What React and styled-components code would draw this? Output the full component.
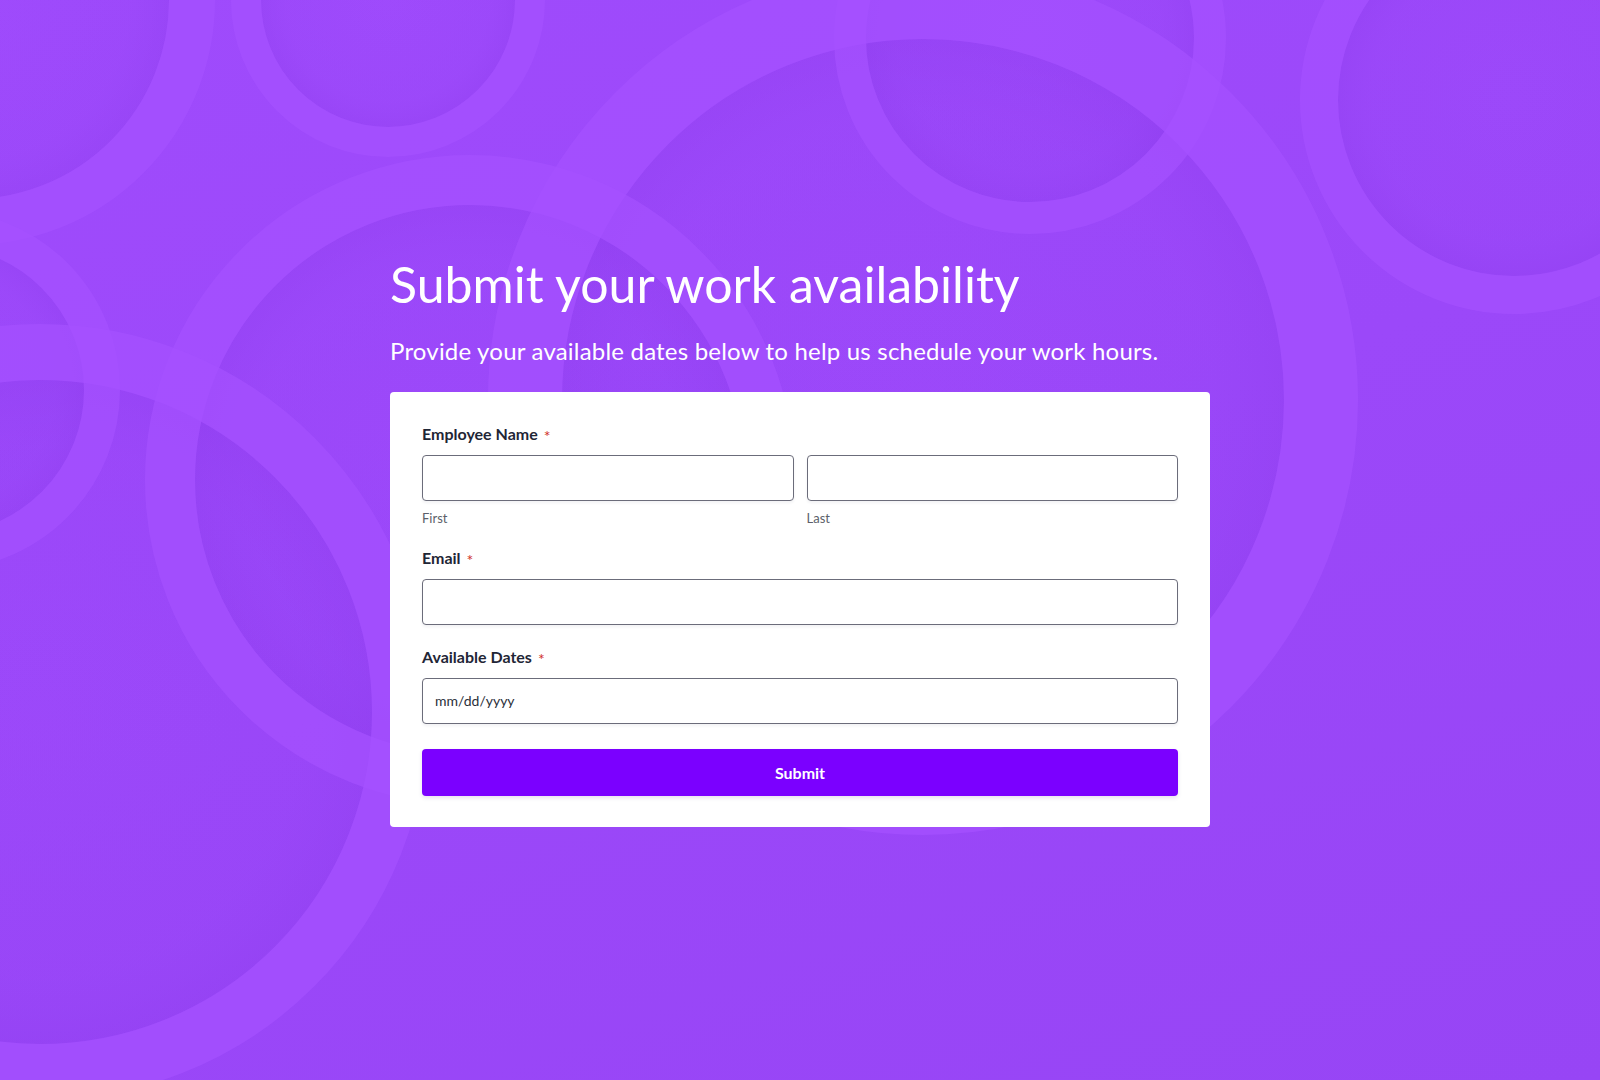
import React from "react";
import styled, { createGlobalStyle } from "styled-components";

const Global = createGlobalStyle`
  html, body { margin: 0; padding: 0; }
  body { font-family: Lato, "Noto Sans", sans-serif; }
  * { box-sizing: border-box; }
`;

const Page = styled.div`
  position: relative;
  width: 100%;
  min-height: 1080px;
  overflow: hidden;
  background: linear-gradient(160deg, #9f4bfc 0%, #9b48f9 50%, #9745f5 100%);
  display: flex;
  align-items: center;
  justify-content: center;
`;

const Backdrop = styled.svg`
  position: absolute;
  inset: 0;
  width: 100%;
  height: 100%;
  pointer-events: none;
`;

const Column = styled.main`
  position: relative;
  width: 820px;
  display: flex;
  flex-direction: column;
`;

const Title = styled.h1`
  margin: 0;
  font-size: 50px;
  line-height: 60px;
  font-weight: 400;
  color: #ffffff;
`;

const Subtitle = styled.p`
  margin: 22px 0 0;
  font-size: 24px;
  line-height: 30px;
  letter-spacing: 0.2px;
  font-weight: 400;
  color: #ffffff;
`;

const Card = styled.form`
  margin-top: 26px;
  background: #ffffff;
  border-radius: 4px;
  padding: 32px 32px 31px;
  display: flex;
  flex-direction: column;
`;

const Field = styled.div`
  display: flex;
  flex-direction: column;
  margin-bottom: ${(p) => p.$gap || 24}px;
`;

const Label = styled.label`
  font-size: 16px;
  line-height: 20px;
  font-weight: 700;
  color: #1f2636;
  margin-bottom: 11px;
  display: flex;
  align-items: center;
`;

const Star = styled.span`
  color: #d0302a;
  font-size: 16px;
  line-height: 14px;
  margin-left: 6px;
  margin-top: 4px;
  font-weight: 400;
`;

const Row = styled.div`
  display: grid;
  grid-template-columns: 1fr 1fr;
  gap: 13px;
`;

const Sub = styled.div`
  display: flex;
  flex-direction: column;
`;

const Input = styled.input`
  width: 100%;
  height: 46px;
  border: 1px solid #6b6c7a;
  border-radius: 4px;
  background: #ffffff;
  box-shadow: 0 2px 3px rgba(40, 40, 60, 0.06);
  padding: 0 12px;
  font-family: Lato, "Noto Sans", sans-serif;
  font-size: 14px;
  color: #2a2f3a;
  outline: none;
  &::placeholder { color: #2a2f3a; opacity: 1; }
`;

const Hint = styled.span`
  margin-top: 9px;
  font-size: 13px;
  line-height: 16px;
  color: #5c5f6a;
`;

const Button = styled.button`
  height: 47px;
  width: 100%;
  border: none;
  border-radius: 4px;
  background: #7b00ff;
  color: #ffffff;
  font-family: Lato, "Noto Sans", sans-serif;
  font-size: 16px;
  font-weight: 700;
  box-shadow: 0 2px 4px rgba(60, 0, 120, 0.12);
  cursor: pointer;
`;

const rings = [
  { cx: -30, cy: 0, r: 222, w: 46 },
  { cx: 388, cy: 0, r: 142, w: 30 },
  { cx: 1030, cy: 38, r: 180, w: 32 },
  { cx: 1514, cy: 100, r: 195, w: 38 },
  { cx: 923, cy: 400, r: 398, w: 74 },
  { cx: 470, cy: 480, r: 300, w: 50 },
  { cx: -60, cy: 390, r: 162, w: 36 },
  { cx: 40, cy: 712, r: 360, w: 56 },
];

function Background() {
  return (
    <Backdrop viewBox="0 0 1600 1080" preserveAspectRatio="none" aria-hidden="true">
      <defs>
        <radialGradient id="shade" cx="50%" cy="50%" r="50%">
          <stop offset="0%" stopColor="#8f3ff0" stopOpacity="0" />
          <stop offset="80%" stopColor="#8f3ff0" stopOpacity="0.14" />
          <stop offset="100%" stopColor="#8a3aea" stopOpacity="0.28" />
        </radialGradient>
      </defs>
      {rings.map((c, i) => (
        <circle key={"f" + i} cx={c.cx} cy={c.cy} r={c.r - c.w / 2} fill="url(#shade)" />
      ))}
      {rings.map((c, i) => (
        <circle key={"s" + i} cx={c.cx} cy={c.cy} r={c.r} fill="none" stroke="#a551ff" strokeOpacity="0.7" strokeWidth={c.w} />
      ))}
    </Backdrop>
  );
}

export default function App() {
  return (
    <>
      <Global />
      <Page>
        <Background />
        <Column>
          <Title>Submit your work availability</Title>
          <Subtitle>Provide your available dates below to help us schedule your work hours.</Subtitle>
          <Card onSubmit={(e) => e.preventDefault()}>
            <Field $gap={22}>
              <Label>Employee Name<Star>*</Star></Label>
              <Row>
                <Sub>
                  <Input type="text" aria-label="First" />
                  <Hint>First</Hint>
                </Sub>
                <Sub>
                  <Input type="text" aria-label="Last" />
                  <Hint>Last</Hint>
                </Sub>
              </Row>
            </Field>
            <Field $gap={22}>
              <Label>Email<Star>*</Star></Label>
              <Input type="email" aria-label="Email" />
            </Field>
            <Field $gap={25}>
              <Label>Available Dates<Star>*</Star></Label>
              <Input type="text" placeholder="mm/dd/yyyy" aria-label="Available Dates" />
            </Field>
            <Button type="submit">Submit</Button>
          </Card>
        </Column>
      </Page>
    </>
  );
}
